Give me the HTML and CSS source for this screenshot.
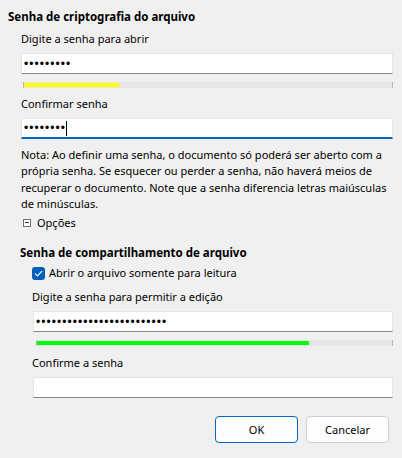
FILE: index.html
```html
<!DOCTYPE html>
<html lang="pt">
<head>
<meta charset="utf-8">
<link rel="stylesheet" href="styles.css">
</head>
<body>
<div class="dlg">
  <div class="head h1">Senha de criptografia do arquivo</div>
  <div class="sec1">
    <div class="lbl lbl-first">Digite a senha para abrir</div>
    <div class="inp"><span class="pw">•••••••••</span></div>
    <div class="bar"><div class="fill yellow" style="width:95px"></div></div>
    <div class="lbl">Confirmar senha</div>
    <div class="inp focus"><span class="pw">••••••••</span><span class="caret"></span></div>
    <p class="note">Nota: Ao definir uma senha, o documento só poderá ser aberto com a<br>própria senha. Se esquecer ou perder a senha, não haverá meios de<br>recuperar o documento. Note que a senha diferencia letras maiúsculas<br>de minúsculas.</p>
    <div class="opts"><span class="tbox"></span><span>Opções</span></div>
    <div class="head h2">Senha de compartilhamento de arquivo</div>
  </div>
  <div class="sec2">
    <div class="chk"><span class="cb"><svg width="13" height="13" viewBox="0 0 13 13"><path d="M3.3 6.8 L5.4 8.9 L9.8 4.4" fill="none" stroke="#fff" stroke-width="1.2" stroke-linecap="round" stroke-linejoin="round"/></svg></span><span>Abrir o arquivo somente para leitura</span></div>
    <div class="lbl">Digite a senha para permitir a edição</div>
    <div class="inp"><span class="pw">•••••••••••••••••••••••••</span></div>
    <div class="bar"><div class="fill green" style="width:272px"></div></div>
    <div class="lbl lbl-conf">Confirme a senha</div>
    <div class="inp"></div>
  </div>
  <div class="btns">
    <button class="btn ok">OK</button>
    <button class="btn">Cancelar</button>
  </div>
</div>
</body>
</html>
```
FILE: styles.css
```css
html, body {
  margin: 0;
  padding: 0;
  background: #f0f0f0;
}
body {
  width: 402px;
  height: 458px;
  overflow: hidden;
  font-family: "Noto Sans", "Open Sans", sans-serif;
  font-size: 11px;
  color: #000;
}
.dlg {
  padding: 9px 9px 0 8px;
}
.head {
  font-weight: bold;
  font-size: 11.5px;
  line-height: 16px;
  height: 16px;
  white-space: nowrap;
}
.sec1 {
  padding-left: 13px;
}
.lbl {
  line-height: 16px;
  height: 16px;
  margin-top: 8px;
  white-space: nowrap;
}
.lbl-first {
  margin-top: 6px;
}
.lbl-conf {
  margin-top: 9px;
}
.inp {
  box-sizing: border-box;
  height: 21px;
  margin-top: 6px;
  background: #fff;
  border: 1px solid #e6e6e6;
  border-bottom: 1px solid #868686;
  display: flex;
  align-items: center;
  padding-left: 2px;
}
.inp.focus {
  border-bottom: 2px solid #0067c0;
}
.pw {
  font-family: "Liberation Sans", Arial, sans-serif;
  font-size: 12px;
  letter-spacing: 1.05px;
  line-height: 12px;
  color: #000;
}
.caret {
  width: 1px;
  height: 15px;
  background: #000;
}
.bar {
  box-sizing: border-box;
  height: 6px;
  margin-top: 8px;
  margin-left: 2px;
  background: #e6e6e6;
  border-left: 1px solid #b5b5b5;
  border-right: 1px solid #b5b5b5;
  padding: 1px 0;
}
.fill {
  height: 4px;
}
.yellow { background: #ffff00; }
.green { background: #00ff00; }
.note {
  margin: 8px 0 0 0;
  line-height: 16.3px;
  white-space: nowrap;
}
.opts {
  margin-top: 2.5px;
  height: 16px;
  line-height: 16px;
  display: flex;
  align-items: center;
  gap: 6px;
  padding-left: 2px;
}
.tbox {
  box-sizing: border-box;
  width: 8px;
  height: 8px;
  border: 1px solid #6f6f6f;
  position: relative;
  background: #fff;
}
.tbox::after {
  content: "";
  position: absolute;
  left: 1px;
  right: 1px;
  top: 2.5px;
  height: 1px;
  background: #333;
}
.h2 {
  margin-top: 14.5px;
  margin-left: -1px;
}
.sec2 {
  padding-left: 24px;
}
.chk {
  margin-top: 4px;
  height: 16px;
  line-height: 16px;
  display: flex;
  align-items: center;
  gap: 4px;
  white-space: nowrap;
}
.cb {
  width: 13px;
  height: 13px;
  border-radius: 3px;
  background: #005fb8;
  display: flex;
}
.sec2 .inp {
  margin-left: 1px;
}
.sec2 .bar {
  margin-left: 4px;
}
.btns {
  display: flex;
  justify-content: flex-end;
  gap: 8px;
  margin-top: 18px;
  padding-right: 4px;
}
.btn {
  box-sizing: border-box;
  width: 83px;
  height: 27px;
  font-family: "Noto Sans", "Open Sans", sans-serif;
  font-size: 11px;
  color: #000;
  background: #fdfdfd;
  border: 1px solid #d0d0d0;
  border-radius: 4px;
  padding: 0;
}
.btn.ok {
  border-color: #0067c0;
}
```
